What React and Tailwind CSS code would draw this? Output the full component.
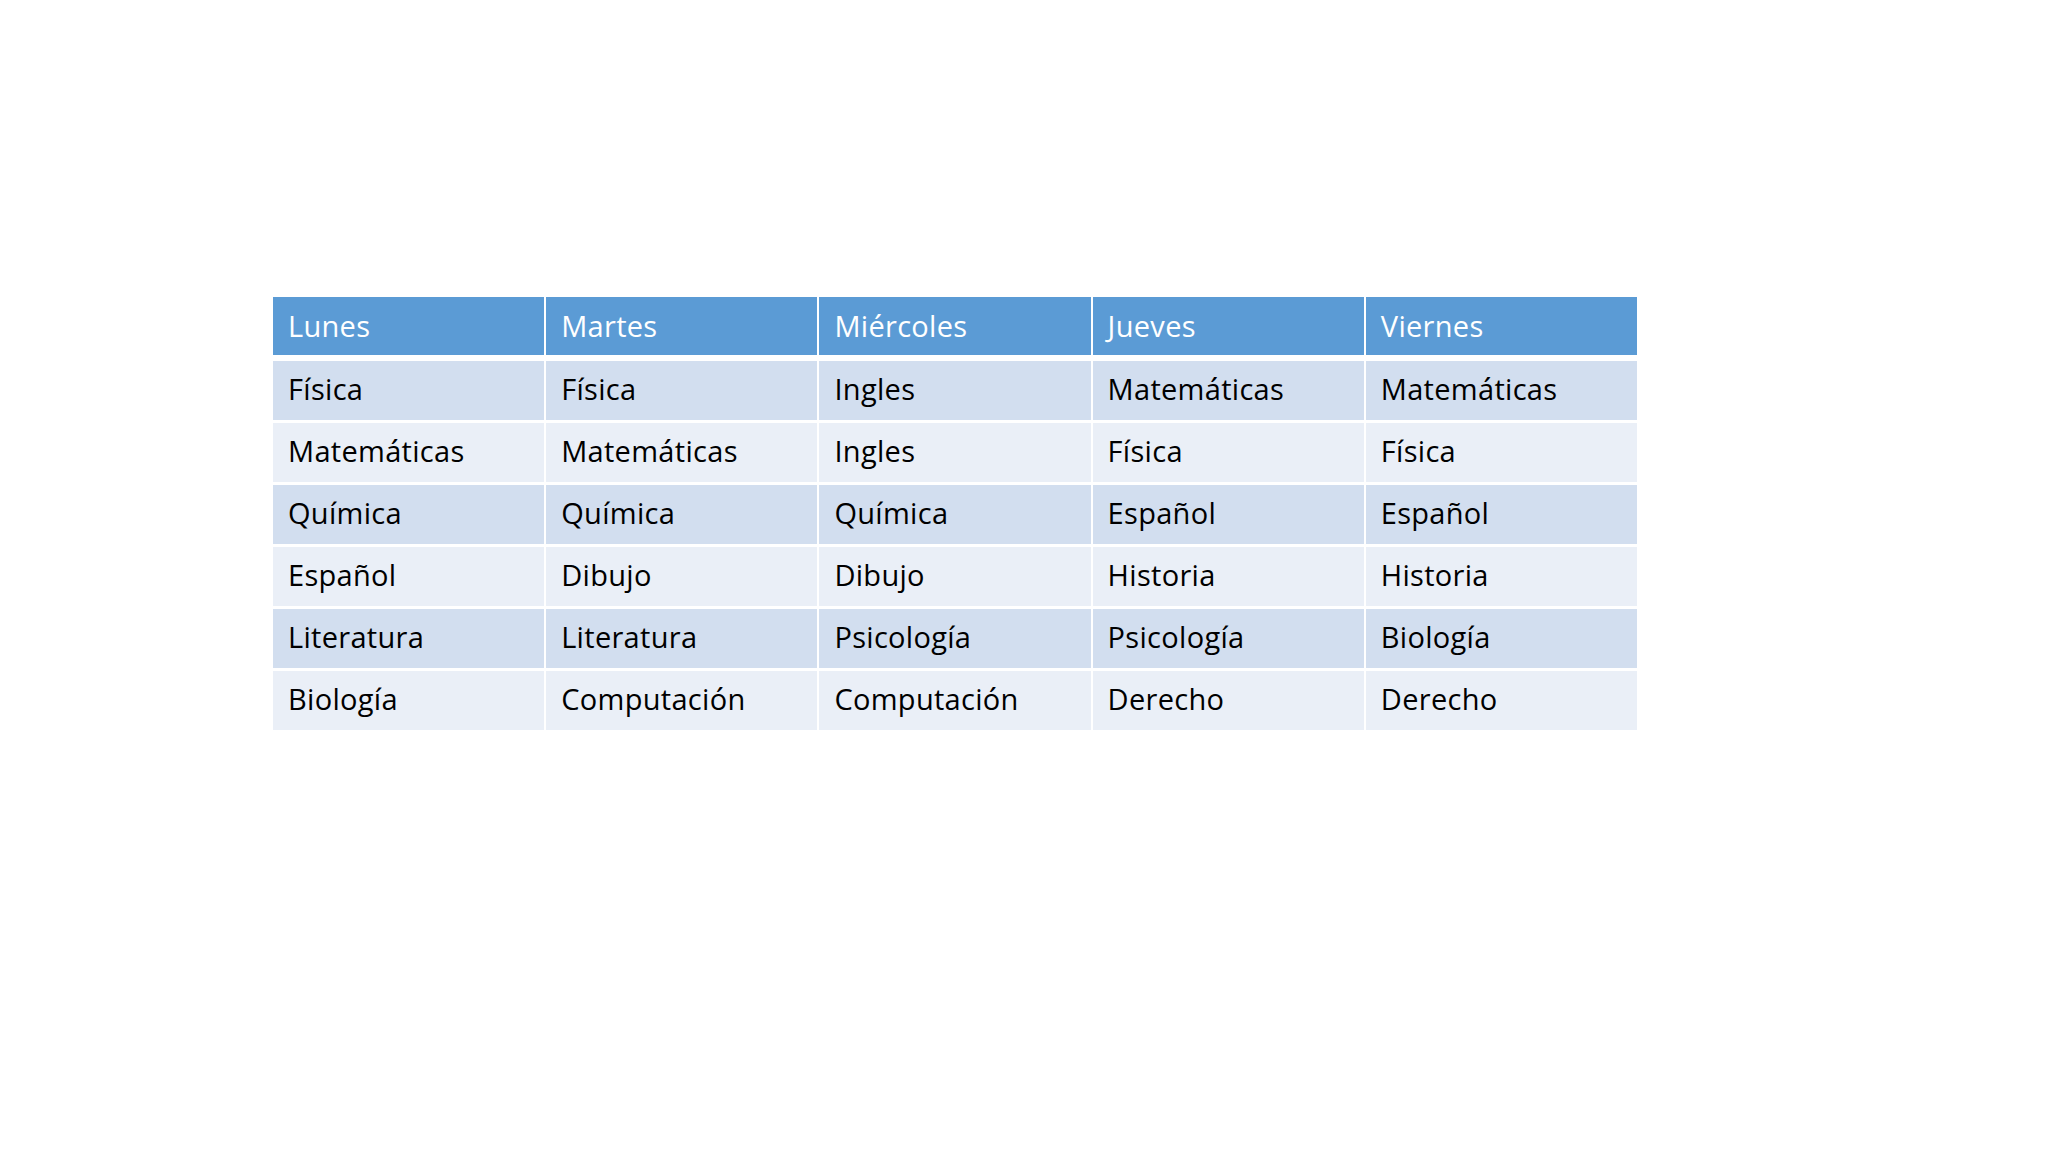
const days = ["Lunes", "Martes", "Miércoles", "Jueves", "Viernes"];

const rows = [
  ["Física", "Física", "Ingles", "Matemáticas", "Matemáticas"],
  ["Matemáticas", "Matemáticas", "Ingles", "Física", "Física"],
  ["Química", "Química", "Química", "Español", "Español"],
  ["Español", "Dibujo", "Dibujo", "Historia", "Historia"],
  ["Literatura", "Literatura", "Psicología", "Psicología", "Biología"],
  ["Biología", "Computación", "Computación", "Derecho", "Derecho"]
];

export default function App() {
  return (
    <div className="min-h-screen w-full bg-white pt-[297px] pl-[273px] font-['Open_Sans','Liberation_Sans',sans-serif]">
      <div className="flex w-[1364px] flex-col gap-[3px]">
        <div className="mb-[3px] grid h-[58px] grid-cols-5 gap-[2px]">
          {days.map((day) => (
            <div key={day} className="flex items-center bg-[#5b9bd5] pl-[15px] text-[29px] font-[370] tracking-[0.3px] text-white">
              {day}
            </div>
          ))}
        </div>
        {rows.map((row, i) => (
          <div key={i} className="grid h-[59px] grid-cols-5 gap-[2px]">
            {row.map((cell, j) => (
              <div
                key={j}
                className={`flex items-center pl-[15px] pb-[4px] text-[29px] font-[370] tracking-[0.3px] text-black ${i % 2 === 0 ? "bg-[#d2deef]" : "bg-[#eaeff7]"}`}
              >
                {cell}
              </div>
            ))}
          </div>
        ))}
      </div>
    </div>
  );
}
